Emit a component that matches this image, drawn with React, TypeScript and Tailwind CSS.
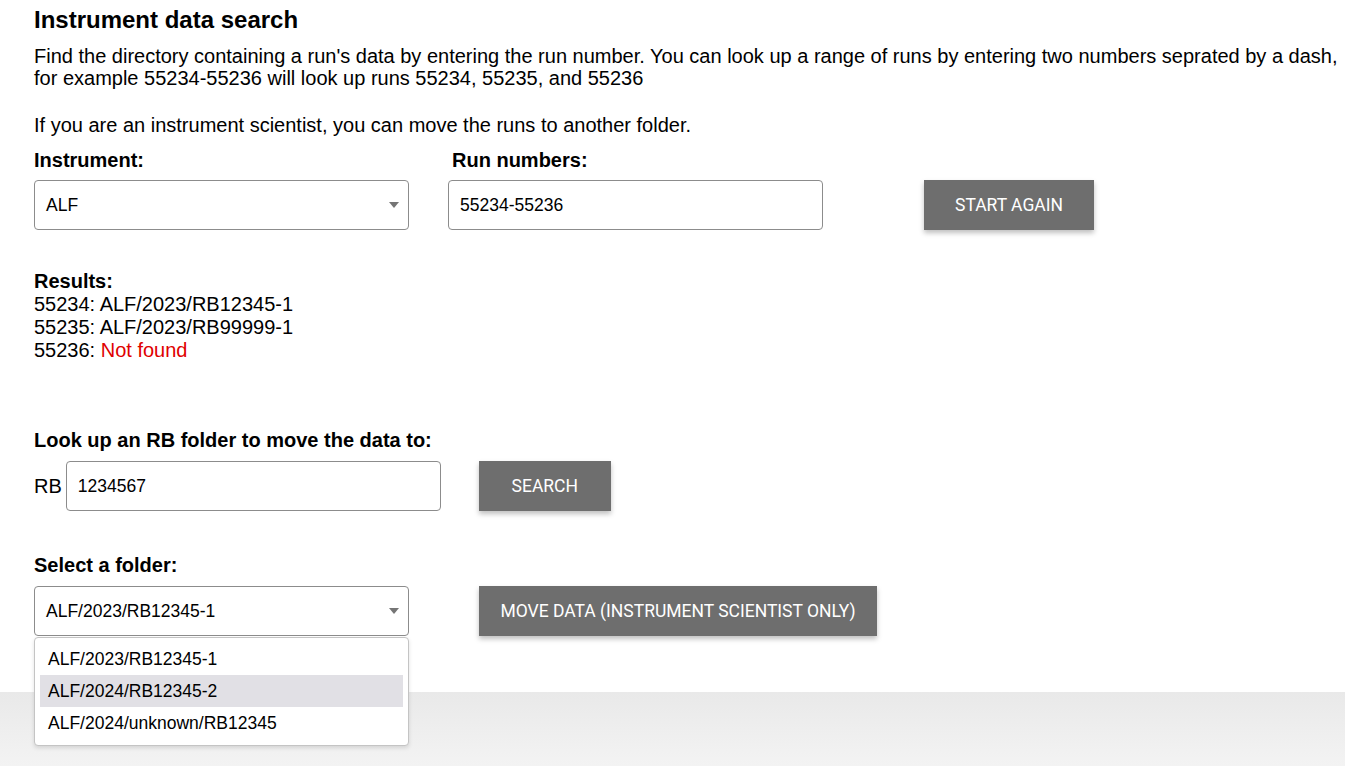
import React from "react";

function Arrow() {
  return (
    <svg width="10" height="6" viewBox="0 0 10 6" className="shrink-0">
      <path d="M0 0 L10 0 L5 6 Z" fill="#757575" />
    </svg>
  );
}

function Button({ children, className = "" }: { children: React.ReactNode; className?: string }) {
  return (
    <button
      className={
        "h-[50px] bg-[#6e6e6e] text-white text-[17.5px] uppercase shadow-[0_3px_5px_rgba(0,0,0,0.25)] " + className
      }
      style={{ fontFamily: "Roboto, 'Liberation Sans', sans-serif" }}
    >
      {children}
    </button>
  );
}

export default function App() {
  return (
    <div
      className="min-h-[766px] bg-white text-black flex flex-col"
      style={{ fontFamily: "'Liberation Sans', Arial, sans-serif" }}
    >
      <div className="pl-[34px] pr-0">
        <h1 className="pt-[6px] text-[24px] leading-[28px] font-bold">Instrument data search</h1>
        <p className="mt-[11px] text-[20px] leading-[22px]">
          Find the directory containing a run's data by entering the run number. You can look up a range of runs by
          entering two numbers seprated by a dash, for example 55234-55236 will look up runs 55234, 55235, and 55236
        </p>
        <p className="mt-[25px] text-[20px] leading-[22px]">
          If you are an instrument scientist, you can move the runs to another folder.
        </p>

        <div className="mt-[13px] flex items-end">
          <div className="w-[375px] flex flex-col">
            <label className="text-[20px] leading-[22px] font-bold">Instrument:</label>
            <div className="mt-[9px] h-[50px] border border-[#8c8c8c] rounded-[4px] flex items-center justify-between pl-[11px] pr-[9px] text-[17.5px]">
              <span>ALF</span>
              <Arrow />
            </div>
          </div>
          <div className="ml-[39px] w-[375px] flex flex-col">
            <label className="pl-[4px] text-[20px] leading-[22px] font-bold">Run numbers:</label>
            <div className="mt-[9px] h-[50px] border border-[#8c8c8c] rounded-[4px] flex items-center pl-[11px] text-[17.5px]">
              55234-55236
            </div>
          </div>
          <Button className="ml-[101px] w-[170px]">Start again</Button>
        </div>

        <div className="mt-[40px] text-[20px] leading-[23px]">
          <div className="font-bold">Results:</div>
          <div>55234: ALF/2023/RB12345-1</div>
          <div>55235: ALF/2023/RB99999-1</div>
          <div>
            55236: <span className="text-[#e00000]">Not found</span>
          </div>
        </div>

        <div className="mt-[67px] text-[20px] leading-[22px] font-bold">Look up an RB folder to move the data to:</div>
        <div className="mt-[10px] flex items-center">
          <span className="text-[20px] mr-[4px]">RB</span>
          <div className="w-[375px] h-[50px] border border-[#8c8c8c] rounded-[4px] flex items-center pl-[11px] text-[17.5px]">
            1234567
          </div>
          <Button className="ml-[38px] w-[132px]">Search</Button>
        </div>

        <div className="mt-[43px] text-[20px] leading-[22px] font-bold">Select a folder:</div>
        <div className="mt-[10px] flex items-center">
          <div className="relative w-[375px]">
            <div className="h-[50px] border border-[#8c8c8c] rounded-[4px] flex items-center justify-between pl-[11px] pr-[9px] text-[17.5px]">
              <span>ALF/2023/RB12345-1</span>
              <Arrow />
            </div>
            <div className="absolute left-0 top-[51px] w-[375px] z-10 bg-white border border-[#c4c4c4] rounded-[4px] shadow-[0_2px_4px_rgba(0,0,0,0.12)] pt-[5px] pb-[6px] px-[5px] text-[17.5px]">
              <div className="h-[32px] flex items-center pl-[8px]">ALF/2023/RB12345-1</div>
              <div className="h-[32px] flex items-center pl-[8px] bg-[#e1e0e5]">ALF/2024/RB12345-2</div>
              <div className="h-[32px] flex items-center pl-[8px]">ALF/2024/unknown/RB12345</div>
            </div>
          </div>
          <Button className="ml-[70px] w-[398px]">Move data (instrument scientist only)</Button>
        </div>
      </div>

      <div className="mt-[56px] flex-1 bg-gradient-to-b from-[#e9e9e9] to-[#f3f3f3]" />
    </div>
  );
}
